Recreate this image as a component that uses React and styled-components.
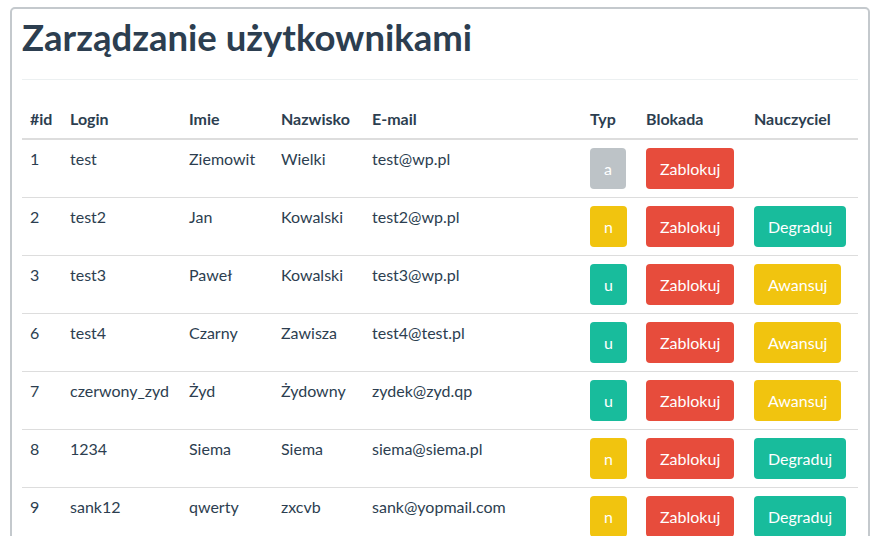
import React from 'react';
import styled, { createGlobalStyle } from 'styled-components';

const GlobalStyle = createGlobalStyle`
  html, body {
    margin: 0;
    padding: 0;
    background: #fff;
  }
  body {
    font-family: Lato, "Noto Sans", "Liberation Sans", sans-serif;
    font-size: 16px;
    color: #2c3e50;
  }
`;

const Page = styled.div`
  padding: 7px 0 0 10px;
`;

const Card = styled.div`
  width: 860px;
  box-sizing: border-box;
  border: 2px solid #c4c9cd;
  border-radius: 5px;
  padding: 0 10px 40px;
`;

const Title = styled.h1`
  margin: 7px 0 20px;
  font-size: 36.5px;
  line-height: 43px;
  font-weight: 700;
  color: #2c3e50;
`;

const Divider = styled.hr`
  margin: 0 0 20px;
  border: 0;
  border-top: 1px solid #ecf0f1;
`;

const Table = styled.table`
  width: 100%;
  border-collapse: collapse;
  table-layout: fixed;
`;

const Th = styled.th`
  box-sizing: border-box;
  width: ${({ $w }) => $w}px;
  padding: 8px;
  text-align: left;
  font-weight: 700;
  line-height: 22px;
  border-bottom: 2px solid #dddddd;
`;

const Td = styled.td`
  padding: 8px;
  line-height: 22px;
  vertical-align: top;
  border-top: 1px solid #dddddd;
  white-space: nowrap;
`;

const colors = {
  gray: '#bdc3c7',
  yellow: '#f1c40f',
  green: '#18bc9c',
  red: '#e74c3c',
};

const Button = styled.button`
  display: inline-block;
  box-sizing: border-box;
  height: 41px;
  padding: 0 14px;
  border: 0;
  border-radius: 4px;
  background: ${({ $color }) => colors[$color]};
  color: #fff;
  font-family: inherit;
  font-size: 16px;
  line-height: 41px;
  cursor: pointer;
`;

const columns = [
  ['#id', 40],
  ['Login', 119],
  ['Imie', 92],
  ['Nazwisko', 91],
  ['E-mail', 218],
  ['Typ', 56],
  ['Blokada', 108],
  ['Nauczyciel', 112],
];

const users = [
  { id: 1, login: 'test', first: 'Ziemowit', last: 'Wielki', email: 'test@wp.pl', type: 'a' },
  { id: 2, login: 'test2', first: 'Jan', last: 'Kowalski', email: 'test2@wp.pl', type: 'n' },
  { id: 3, login: 'test3', first: 'Paweł', last: 'Kowalski', email: 'test3@wp.pl', type: 'u' },
  { id: 6, login: 'test4', first: 'Czarny', last: 'Zawisza', email: 'test4@test.pl', type: 'u' },
  { id: 7, login: 'czerwony_zyd', first: 'Żyd', last: 'Żydowny', email: 'zydek@zyd.qp', type: 'u' },
  { id: 8, login: '1234', first: 'Siema', last: 'Siema', email: 'siema@siema.pl', type: 'n' },
  { id: 9, login: 'sank12', first: 'qwerty', last: 'zxcvb', email: 'sank@yopmail.com', type: 'n' },
];

const typeColor = { a: 'gray', n: 'yellow', u: 'green' };

const App = () => {
  return (
    <Page>
      <GlobalStyle />
      <Card>
        <Title>Zarządzanie użytkownikami</Title>
        <Divider />
        <Table>
          <thead>
            <tr>
              {columns.map(([label, w]) => (
                <Th key={label} $w={w}>{label}</Th>
              ))}
            </tr>
          </thead>
          <tbody>
            {users.map((u) => (
              <tr key={u.id}>
                <Td>{u.id}</Td>
                <Td>{u.login}</Td>
                <Td>{u.first}</Td>
                <Td>{u.last}</Td>
                <Td>{u.email}</Td>
                <Td>
                  <Button $color={typeColor[u.type]}>{u.type}</Button>
                </Td>
                <Td>
                  <Button $color="red">Zablokuj</Button>
                </Td>
                <Td>
                  {u.type === 'n' && <Button $color="green">Degraduj</Button>}
                  {u.type === 'u' && <Button $color="yellow">Awansuj</Button>}
                </Td>
              </tr>
            ))}
          </tbody>
        </Table>
      </Card>
    </Page>
  );
};

export default App;
